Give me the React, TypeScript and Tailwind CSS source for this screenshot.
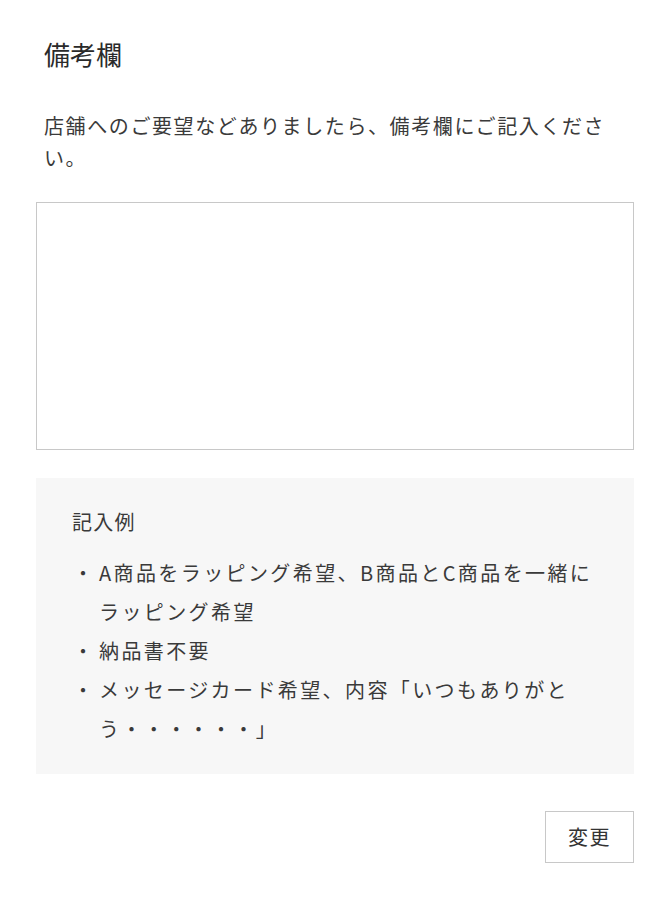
import React from "react";

export default function App() {
  const font = {
    fontFamily: '"Noto Sans CJK JP", "Noto Sans", sans-serif',
  };
  return (
    <div
      className="min-h-[900px] w-full bg-white px-[36px] pt-[36px] text-[#3a3a3a]"
      style={font}
    >
      <h2 className="pl-[8px] text-[26px] leading-[36px] font-normal text-[#2a2a2a]">
        備考欄
      </h2>
      <p className="mt-[38px] pl-[8px] text-[20px] leading-[32px] tracking-[0.08em]">
        店舗へのご要望などありましたら、備考欄にご記入ください。
      </p>
      <textarea className="mt-[28px] block h-[248px] w-full resize-none border border-[#c8c8c8] bg-white p-2 outline-none" />
      <div className="mt-[28px] bg-[#f7f7f7] px-[36px] pt-[28px] pb-[26px]">
        <p className="text-[20px] leading-[32px] tracking-[0.06em]">記入例</p>
        <ul className="mt-[15px] text-[20px] leading-[39px] tracking-[0.12em]">
          <li className="flex">
            <span className="w-[27px] shrink-0 pl-[1px]">・</span>
            <span>A商品をラッピング希望、B商品とC商品を一緒にラッピング希望</span>
          </li>
          <li className="flex">
            <span className="w-[27px] shrink-0 pl-[1px]">・</span>
            <span>納品書不要</span>
          </li>
          <li className="flex">
            <span className="w-[27px] shrink-0 pl-[1px]">・</span>
            <span>メッセージカード希望、内容「いつもありがとう・・・・・・」</span>
          </li>
        </ul>
      </div>
      <div className="mt-[37px] flex justify-end">
        <button className="h-[52px] w-[89px] border border-[#c8c8c8] bg-white text-[20px] tracking-[0.08em] text-[#333]">
          変更
        </button>
      </div>
    </div>
  );
}
